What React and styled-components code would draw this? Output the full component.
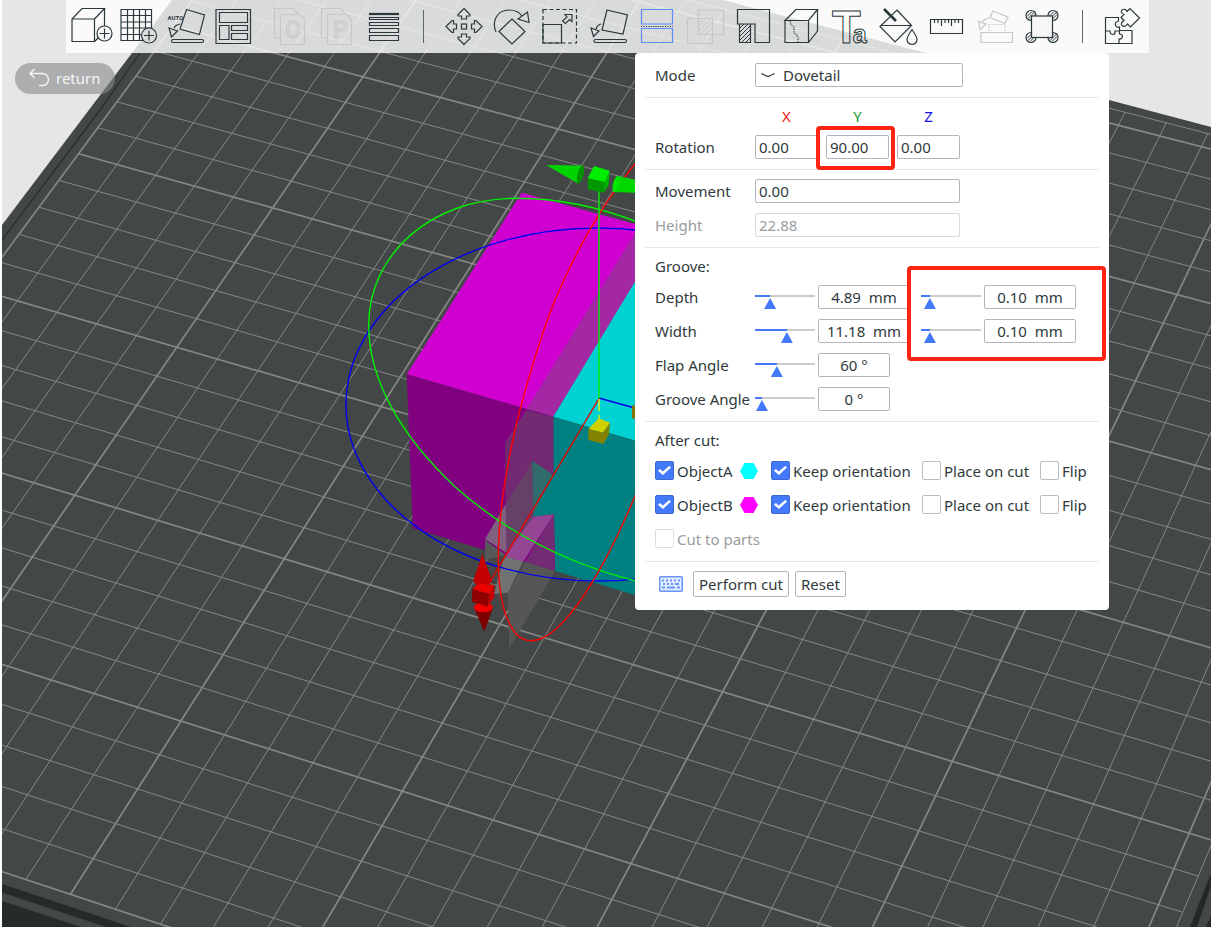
import React, { useState } from "react";
import styled, { createGlobalStyle } from "styled-components";

const ink = "#303a3c";
const faded = "#c6c7c7";
const blue = "#4479fb";
const line = "#b4b4bc";

const GlobalStyle = createGlobalStyle`
  *, *::before, *::after { box-sizing: border-box; }
  body {
    margin: 0;
    background: #e6e6e6;
    color: ${ink};
    font: 15px/18px "Noto Sans", "Open Sans", sans-serif;
  }
  button, input, select { font: inherit; color: inherit; }
`;

const Page = styled.main`
  position: relative;
  min-height: 100vh;
  overflow: hidden;
  border-left: 2px solid #fff;
`;

const Scene = styled.svg`
  position: absolute;
  inset: 0;
  width: 100%;
  height: 100%;
`;

const Overlay = styled.div`
  position: relative;
  display: flex;
  flex-direction: column;
`;

/* ---------- toolbar ---------- */

const Toolbar = styled.nav`
  display: flex;
  align-self: flex-start;
  height: 53px;
  margin-left: 64px;
  padding: 0 1px 0 2px;
  background: rgba(255, 255, 255, 0.8);
`;

const ToolGroup = styled.div`
  display: flex;
  margin-right: ${(p) => p.$gap || 0}px;
`;

const ToolButton = styled.button`
  width: ${(p) => p.$width}px;
  height: 53px;
  padding: 0;
  border: 0;
  background: none;
  color: ${(p) => (p.disabled ? faded : "#2c393c")};
  svg { display: block; overflow: visible; }
`;

const Divider = styled.span`
  width: ${(p) => p.$width}px;
  display: flex;
  justify-content: center;
  align-items: center;
  &::before {
    content: "";
    width: 1px;
    height: 33px;
    background: #5f6869;
  }
`;

/* ---------- workspace ---------- */

const Workspace = styled.div`
  display: flex;
  justify-content: space-between;
  align-items: flex-start;
  padding: 0 102px 0 13px;
`;

const ReturnButton = styled.button`
  display: flex;
  align-items: center;
  gap: 6px;
  height: 31px;
  margin-top: 10px;
  padding: 0 14px 2px;
  border: 0;
  border-radius: 16px;
  background: rgba(135, 137, 139, 0.6);
  color: #f4f4f4;
`;

const Panel = styled.form`
  position: relative;
  width: 474px;
  padding: 1px 10px 0;
  border-radius: 4px;
  background: #fff;
`;

const Section = styled.section`
  display: flex;
  flex-direction: column;
  gap: 10px;
  padding: 9px 10px 10px;
  border-bottom: 1px solid #e8e8e8;
`;

const Title = styled.h2`
  margin: 0;
  font-size: 15px;
  line-height: 18px;
  font-weight: 400;
`;

const Row = styled.div`
  display: flex;
  align-items: center;
  height: 24px;
  color: ${(p) => (p.$muted ? "#9a9c9d" : ink)};
`;

const RowLabel = styled.label`
  flex: 0 0 100px;
  white-space: nowrap;
`;

const Axes = styled.div`
  display: flex;
  gap: 8px;
`;

const AxisHeader = styled(Axes)`
  height: 18px;
  padding-left: 100px;
`;

const AxisName = styled.span`
  width: 63px;
  text-align: center;
  color: ${(p) => p.$color};
`;

const Field = styled.input`
  width: ${(p) => p.$width}px;
  height: 24px;
  padding: 0 3px;
  border: 1px solid ${line};
  border-radius: 2px;
  background: #fff;
  outline: 0;
  text-align: ${(p) => (p.$center ? "center" : "left")};
  &:disabled { border-color: #d9d9de; color: #9a9c9d; }
`;

const SelectBox = styled.div`
  position: relative;
  width: 208px;
  svg { position: absolute; left: 6px; top: 9px; pointer-events: none; }
`;

const Select = styled.select`
  display: block;
  width: 100%;
  height: 24px;
  padding: 0 0 0 27px;
  border: 1px solid ${line};
  border-radius: 2px;
  background: #fff;
  appearance: none;
`;

const Range = styled.input`
  appearance: none;
  align-self: flex-start;
  width: 60px;
  height: 22px;
  margin: 0 3px 0 ${(p) => (p.$second ? 11 : 0)}px;
  background: none;
  &::-webkit-slider-runnable-track {
    height: 2px;
    background: linear-gradient(to right, ${blue} ${(p) => p.$fill}px, #cbcbcb ${(p) => p.$fill}px);
  }
  &::-webkit-slider-thumb {
    appearance: none;
    width: 12px;
    height: 11px;
    margin-top: 3px;
    background: ${blue};
    clip-path: polygon(50% 0, 100% 100%, 0 100%);
  }
`;

const CheckRow = styled.div`
  display: grid;
  grid-template-columns: 85px 31px 151px 118px 1fr;
  align-items: center;
  height: 24px;
  padding-bottom: 1px;
`;

const CheckLabel = styled.label`
  display: flex;
  align-items: center;
  gap: 3px;
  white-space: nowrap;
  color: ${(p) => (p.$muted ? "#9a9c9d" : ink)};
`;

const Tick = styled.input`
  appearance: none;
  flex: none;
  width: 19px;
  height: 19px;
  margin: 0;
  border: 1px solid #bcbcc4;
  border-radius: 2px;
  background: #fff;
  &::before {
    content: "";
    display: none;
    width: 13px;
    height: 9px;
    margin: 4px 2px;
    background: #fff;
    clip-path: polygon(0 52%, 14% 34%, 37% 62%, 86% 0, 100% 17%, 38% 100%);
  }
  &:checked { border-color: #3a66cf; background: ${blue}; }
  &:checked::before { display: block; }
  &:disabled { border-color: #dedee2; }
`;

const Actions = styled.div`
  display: flex;
  align-items: center;
  gap: 6px;
  padding: 9px 10px 13px 14px;
  svg { margin-right: 4px; }
`;

const ActionButton = styled.button`
  height: 26px;
  padding: 0 5px;
  border: 1px solid ${line};
  border-radius: 2px;
  background: #fff;
`;

const Highlight = styled.span`
  position: absolute;
  left: ${(p) => p.$x}px;
  top: ${(p) => p.$y}px;
  width: ${(p) => p.$w}px;
  height: ${(p) => p.$h}px;
  border: 4px solid #ff2314;
  border-radius: 4px;
  pointer-events: none;
`;

/* ---------- build plate ---------- */

// Perspective projection of plate cells (u to the right, v toward the viewer).
function project(u, v) {
  const w = 1 - 0.0031 * u - 0.0066 * v;
  return [(43.05 * u - 22.55 * v + 180.9) / w, (11.59 * u + 28.75 * v + 721) / w];
}

const U0 = -10, U1 = 20.5, V0 = -25.5, V1 = 5;

function segment(a, b) {
  const [x1, y1] = project(...a);
  const [x2, y2] = project(...b);
  return `M${x1.toFixed(1)} ${y1.toFixed(1)}L${x2.toFixed(1)} ${y2.toFixed(1)}`;
}

function gridPaths() {
  const thin = [];
  const thick = [];
  for (let u = U0; u <= 20; u++) {
    (u % 5 === 0 ? thick : thin).push(segment([u, V0], [u, V1]));
  }
  for (let v = -25; v <= V1; v++) {
    (v % 5 === 0 ? thick : thin).push(segment([U0, v], [U1, v]));
  }
  thin.push(segment([U0, V0], [U1, V0]), segment([U1, V0], [U1, V1]));
  return { thin: thin.join(""), thick: thick.join("") };
}

const grid = gridPaths();

function PlateScene() {
  return (
    <Scene viewBox="2 0 1209 927" preserveAspectRatio="xMinYMin slice" aria-hidden="true">
      <path d="M172 0H723L926 53 1109 100 1211 127V927H2V225Z" fill="#434747" />
      <path d="M177 0L140 53 100 110 2 240" fill="none" stroke="#2a2d2d" strokeWidth="1.3" />
      <path d="M2 884L131 927H106L2 892.500ZM2 901L81 927H2Z" fill="#272a2a" />
      <path d="M1211 873V886L1197 927H1190ZM1211 916V927H1206Z" fill="#252828" />
      <path d={grid.thin} fill="none" stroke="#858883" strokeWidth="1" />
      <path d={grid.thick} fill="none" stroke="#858883" strokeWidth="1.7" />

      <path d="M521.700 192.700L640 225.500V240L526.700 409 406.700 374.300Z" fill="#d000d0" />
      <path d="M526.700 409L640 225V275L553.300 416.700Z" fill="#a428a4" />
      <path d="M553.300 416.700L640 273.500V442Z" fill="#00d2d2" />
      <path d="M406.700 374.300L553.300 416.700 555 571 412.700 528.300Z" fill="#800080" />
      <path d="M553.300 416.700L640 442V596.500L555 571 554 514.300 533.300 516.700 532.300 460.700 553.300 475Z" fill="#008080" />
      <path d="M526.700 410L553.300 417.300V475L532.300 460.700 505.700 504 505 442.700Z" fill="#722a72" />
      <path d="M532.300 460.700L533.300 516.700 507 556 505.700 504Z" fill="#674067" />
      <path d="M532.300 460.700L552 474 533.300 516Z" fill="#326b6b" />
      <path d="M505.700 504L506.700 553 485 539Z" fill="#80607f" />
      <path d="M485 540L506 555 485 560Z" fill="#565859" />
      <path d="M533.300 516.700L554 514.300 523 562 504 557Z" fill="#944594" />
      <path d="M554 514.300L555 571 525 562Z" fill="#752a76" />
      <path d="M504 556L523 562 508 592.500 494 594Z" fill="#717372" />
      <path d="M525 562L555 571 509.300 649 507.700 593Z" fill="#555655" />

      <g fill="none" strokeWidth="1.400">
        <ellipse cx="598" cy="404.500" rx="252" ry="176.500" stroke="#0000ee" />
        <path d="M640 223C597 206 556 198.300 516.700 198.300C430 198.300 368.700 255 368.700 325C368.700 382 403 438 455 486.700C508 534 571 565 640 582" stroke="#00f000" />
        <path d="M640 158C600 205 572 260 555 300C540 337 524 392 515 430C505 475 498.300 520 498.300 556.700C498.300 612 512 640.700 531 640.700C563 640.700 605 570 640 484" stroke="#f00" />
        <path d="M599 398L640 409.500" stroke="#0000e8" />
        <path d="M599 398.500L491 580" stroke="#e80000" />
        <path d="M599 190V398" stroke="#00ee00" />
        <path d="M599 399V419" stroke="#f0f000" strokeDasharray="12 4" />
      </g>

      <path d="M598.700 418.300L610 422.700 603 432.700 588.300 429Z" fill="#d0d000" />
      <path d="M588.300 429L603 432.700 610 422.700 609 434 603.500 444 588.300 440Z" fill="#828200" />
      <path d="M632 406L640 403V421L632 418Z" fill="#827200" />
      <path d="M594 166L609.700 170.700 605 182.300 587.700 178.300Z" fill="#00ee00" />
      <path d="M587.700 178.300L605 182.300 604 192.700 588 189.500Z" fill="#009a00" />
      <path d="M609.700 170.700L608.500 185 604 192.700 605 182.300Z" fill="#00b400" />
      <path d="M546 165L583 165.500 578 183.500Z" fill="#00d400" />
      <ellipse cx="580.500" cy="174.500" rx="3" ry="9.200" transform="rotate(14 580.500 174.500)" fill="#009200" />
      <path d="M618 176L640 181V193L613 192Z" fill="#00d800" />
      <ellipse cx="616" cy="184" rx="3" ry="8.500" transform="rotate(14 616 184)" fill="#00e600" />
      <path d="M482.300 554L492.300 581Q491 585 483 585T473.300 581Z" fill="#c40000" />
      <path d="M472.300 589L478 583.500 494.300 585 489.300 594Z" fill="#ec0000" />
      <path d="M472.300 589L489.300 594 487.700 606.700 472 601.700Z" fill="#900000" />
      <path d="M489.300 594L494.300 585V597L487.700 606.700Z" fill="#c80000" />
      <path d="M474.500 609L492.500 609 484.300 631.700Z" fill="#7c0000" />
      <ellipse cx="483.300" cy="607.500" rx="9.600" ry="4.800" fill="#f00000" />
      <path d="M472 601.700L487.700 606.700 489 602H473Z" fill="#900000" />
    </Scene>
  );
}

/* ---------- toolbar icons ---------- */

const icons = {
  addObject: (
    <>
      <path d="M72 19H94.500V41.500H72ZL82 8.500H104.500L94.500 19M104.500 8.500V32L94.500 41.500" />
      <circle cx="104.500" cy="33.500" r="7.500" fill="#fafafa" />
      <path d="M99.500 33.500h10M104.500 28.500v10" />
    </>
  ),
  addPlate: (
    <>
      <path d="M121 9.500H151.500V40.500H121ZM127.500 9.500v31M133.500 9.500v31M139.500 9.500v31M145.500 9.500v31M121 15.500h30.500M121 22h30.500M121 28h30.500M121 34.500h30.500" />
      <circle cx="149" cy="35.500" r="7.500" fill="#dcdddd" />
      <path d="M144 35.500h10M149 30.500v10" />
    </>
  ),
  autoOrient: (
    <>
      <path d="M186.500 9.500L204.500 15 199.500 34.500 180 29ZM169 28L177.500 31 171.500 37ZM174 28Q175.500 25 180 24" />
      <rect x="171.500" y="39.500" width="32" height="3" rx="1.500" />
      <text x="167.500" y="20" fontSize="6" fontWeight="700" stroke="none" fill="currentColor" fontFamily="Roboto, sans-serif">AUTO</text>
    </>
  ),
  arrange: (
    <path d="M216 9.500H250.500V43.500H216ZM219.500 12.500H247.500V22.500H219.500ZM219.500 25.500H229V39.500H219.500ZM231.500 25.500H247.500V30.500H231.500ZM231.500 33.500H247.500V39.500H231.500Z" />
  ),
  splitObjects: (
    <>
      <path d="M280.500 38H274.500V8.500H293.500L298 14M280.500 14.500H299.500L304.500 19.500V44.500H280.500Z" />
      <text x="285" y="38" fontSize="23" strokeWidth="0.8" fontFamily="Roboto, sans-serif">O</text>
    </>
  ),
  splitParts: (
    <>
      <path d="M327.500 38H321.500V8.500H340.500L345 14M327.500 14.500H346.500L351.500 19.500V44.500H327.500Z" />
      <text x="333" y="38" fontSize="23" strokeWidth="0.8" fontFamily="Roboto, sans-serif">P</text>
    </>
  ),
  layers: (
    <>
      <path d="M369 14H399" strokeWidth="2.200" />
      <path d="M369.500 17.500h29v2h-29ZM369.500 22.500h29v3h-29ZM369.500 28.500h29v4h-29ZM369.500 35.500h29v5h-29Z" />
    </>
  ),
  move: (
    <>
      <rect x="461.500" y="24" width="5" height="5" />
      {[0, 90, 180, 270].map((angle) => (
        <path key={angle} transform={`rotate(${angle} 464 26.500)`} d="M464 8.500L470 14.500V16H466.500V19H461.500V16H458V14.500Z" />
      ))}
    </>
  ),
  rotate: <path d="M512 19L525 31.500 512 44 499 31.500ZM496 32C491 20 498 10 509 10Q518 10 522 16M518 19L527.500 12 529 22.500Z" />,
  scale: (
    <>
      <path d="M543 9.500H576.500V43H543Z" strokeDasharray="4 2.500" />
      <path d="M543 24.500H561.500V43H543ZM572 14.500H565L567 17 562.500 21 565.500 23.500 569.500 19.500 572 21.500Z" />
    </>
  ),
  layFlat: (
    <>
      <path d="M607 10L627.500 15 623 34 602 30ZM591 28L599 31 593.500 36.500ZM596 29Q597 25 601 24" />
      <rect x="594" y="39.500" width="32.500" height="3" rx="1.500" />
    </>
  ),
  cut: (
    <>
      <path d="M641.500 9.500H672.500V24H641.500ZM641.500 28.500H672.500V42.500H641.500Z" stroke="#5a8cfa" />
      <path d="M641 26.500H673" strokeDasharray="1.200 1.200" />
    </>
  ),
  boolean: (
    <>
      <path d="M698.500 10H723.500V34.500H698.500ZM687.500 18.500H712.500V43.500H687.500Z" />
      <path d="M699 26L706 19M699 31L711 19M701 34L712 23M706 34L712 28" strokeWidth="0.8" />
    </>
  ),
  support: (
    <>
      <path d="M737.500 9.500H769.500V42.500H755V24H737.500ZM739.500 24H750.500V42.500H739.500Z" />
      <path d="M740 28l4-4M740 32l8-8M740 36l10-10M740 40l10-10M742 42l8-8M746 42l4-4" strokeWidth="1" />
    </>
  ),
  seam: (
    <>
      <path d="M785 20.500L796 9.500H817.500L808.500 20.500ZV42.500H808.500V20.500M817.500 9.500V31L808.500 42.500" />
      <path d="M790 21L791 25 794 27V33L798 36V42" strokeDasharray="1.200 1.200" />
    </>
  ),
  text: (
    <text x="832" y="42.500" fontSize="47" strokeWidth="1" fontWeight="700" fontFamily="Liberation Sans, sans-serif">
      T<tspan dx="-8" fontSize="25">a</tspan>
    </text>
  ),
  paint: (
    <>
      <path d="M897 10L911.500 25.500 895 42 880 26.500ZM880.500 25.500H911.500M912 29.500C909 34 907 37 907 39.500A5 5 0 0 0 917 39.500C917 37 915 34 912 29.500Z" />
      <path d="M884 9L896 21" strokeWidth="2.600" />
    </>
  ),
  measure: <path d="M930.500 19.500H962.500V33.500H930.500ZM934.500 20v3M938 20v3M941.500 20v6M945 20v3M948.500 20v3M951.500 20v6M955 20v3M958.500 20v3" />,
  assemble: (
    <>
      <path d="M981 32.500H1012.500V42.500H981ZM993 11L1008 17 1005 23.500 990 17.500ZM978.500 21.500L986 24 980 29.500ZM982 22Q984 19 989 18" />
      <path d="M989 31V24.500H1005V31" strokeDasharray="1.500 1.500" />
    </>
  ),
  brim: (
    <>
      {[[1031, 15.5], [1053, 15.5], [1031, 37.5], [1053, 37.5]].map(([x, y]) => (
        <g key={`${x}-${y}`}>
          <circle cx={x} cy={y} r="5" />
          <path d={`M${x - 4} ${y + 1}l5-5M${x - 3} ${y + 3}l7-7M${x - 1} ${y + 4}l5-5`} strokeWidth="1" />
        </g>
      ))}
      <rect x="1031.500" y="16" width="21" height="21.500" fill="#f6f6f6" />
    </>
  ),
  puzzle: (
    <>
      <path d="M1105.500 17.500H1118.500V21Q1114.500 22 1115.500 25.500Q1117 28 1119.500 27V30.500H1132V43.500H1105.500ZM1105.500 31H1110Q1110 34.500 1113 34.500Q1115.500 34 1115 31H1119.500V34Q1122.500 34 1122.500 36.500Q1122 39.500 1119 39V43.500" />
      <path d="M1121 17.500L1124 14.500Q1120 12.500 1122 10Q1125 8 1127 11.500L1130 8.500 1139.500 18 1130.500 27 1127.500 24Q1125 28 1122 25.500Q1120 23 1124 20.500Z" />
    </>
  ),
};

function Tool({ name, label, x, width = 48, disabled }) {
  return (
    <ToolButton type="button" aria-label={label} disabled={disabled} $width={width}>
      <svg width={width} height="53" viewBox={`${x} 0 ${width} 53`} fill="none" stroke="currentColor" strokeWidth="1.200">
        {icons[name]}
      </svg>
    </ToolButton>
  );
}

const gizmos = [
  ["move", "Move"], ["rotate", "Rotate"], ["scale", "Scale"], ["layFlat", "Lay on face"],
  ["cut", "Cut"], ["boolean", "Mesh boolean", true], ["support", "Support painting"],
  ["seam", "Seam painting"], ["text", "Text shape"], ["paint", "Color painting"],
  ["measure", "Measure"], ["assemble", "Assemble", true], ["brim", "Brim ears"],
];

/* ---------- panel parts ---------- */

function Slider({ label, at, second }) {
  const [value, setValue] = useState(Math.round(((at - 6) / 48) * 100));
  return (
    <Range
      type="range"
      aria-label={label}
      value={value}
      $fill={Math.round(6 + value * 0.48)}
      $second={second}
      onChange={(e) => setValue(Number(e.target.value))}
    />
  );
}

function GrooveRow({ id, label, at, value, tolerance }) {
  return (
    <Row>
      <RowLabel htmlFor={id}>{label}</RowLabel>
      <Slider label={`${label} slider`} at={at} />
      <Field id={id} defaultValue={value} $center $width={tolerance ? 92 : 72} />
      {tolerance && (
        <>
          <Slider label={`${label} tolerance slider`} at={9} second />
          <Field aria-label={`${label} tolerance`} defaultValue={tolerance} $center $width={92} />
        </>
      )}
    </Row>
  );
}

function Check({ children, checked, disabled }) {
  return (
    <CheckLabel $muted={disabled}>
      <Tick type="checkbox" defaultChecked={checked} disabled={disabled} />
      {children}
    </CheckLabel>
  );
}

function ObjectRow({ name, color }) {
  return (
    <CheckRow>
      <Check checked>{name}</Check>
      <svg width="18" height="16" viewBox="0 0 18 16" aria-hidden="true">
        <path d="M4.500 0H13.500L18 8 13.500 16H4.500L0 8Z" fill={color} />
      </svg>
      <Check checked>Keep orientation</Check>
      <Check>Place on cut</Check>
      <Check>Flip</Check>
    </CheckRow>
  );
}

function CutPanel() {
  return (
    <Panel onSubmit={(e) => e.preventDefault()}>
      <Section>
        <Row>
          <RowLabel htmlFor="mode">Mode</RowLabel>
          <SelectBox>
            <Select id="mode" defaultValue="Dovetail">
              <option>Dovetail</option>
              <option>Planar</option>
            </Select>
            <svg width="14" height="8" viewBox="0 0 14 8" fill="none" stroke={ink} strokeWidth="1.200">
              <path d="M0.500 1.500L6 4.200Q7 4.600 8 4.200L13.500 1.500" />
            </svg>
          </SelectBox>
        </Row>
      </Section>
      <Section>
        <AxisHeader>
          <AxisName $color="#f01818">X</AxisName>
          <AxisName $color="#1b9c3c">Y</AxisName>
          <AxisName $color="#1414e6">Z</AxisName>
        </AxisHeader>
        <Row>
          <RowLabel htmlFor="rotation-x">Rotation</RowLabel>
          <Axes>
            <Field id="rotation-x" defaultValue="0.00" $width={63} />
            <Field aria-label="Rotation Y" defaultValue="90.00" $width={63} />
            <Field aria-label="Rotation Z" defaultValue="0.00" $width={63} />
          </Axes>
        </Row>
      </Section>
      <Section>
        <Row>
          <RowLabel htmlFor="movement">Movement</RowLabel>
          <Field id="movement" defaultValue="0.00" $width={205} />
        </Row>
        <Row $muted>
          <RowLabel htmlFor="height">Height</RowLabel>
          <Field id="height" defaultValue="22.88" disabled $width={205} />
        </Row>
      </Section>
      <Section>
        <Title>Groove:</Title>
        <GrooveRow id="depth" label="Depth" at={15} value="4.89  mm" tolerance="0.10  mm" />
        <GrooveRow id="width" label="Width" at={32} value="11.18  mm" tolerance="0.10  mm" />
        <GrooveRow id="flap" label="Flap Angle" at={22} value="60 °" />
        <GrooveRow id="groove" label="Groove Angle" at={7} value="0 °" />
      </Section>
      <Section>
        <Title>After cut:</Title>
        <ObjectRow name="ObjectA" color="#00ffff" />
        <ObjectRow name="ObjectB" color="#ff00ff" />
        <CheckRow>
          <Check disabled>Cut to parts</Check>
        </CheckRow>
      </Section>
      <Actions>
        <svg width="24" height="16" viewBox="0 0 24 16" fill="none" stroke="#6a96fb" aria-label="Keyboard shortcuts">
          <rect x="0.700" y="0.700" width="22.600" height="14.600" rx="2" fill="#e3ebff" strokeWidth="1.600" />
          <path d="M3 4.500h2M7 4.500h2M11 4.500h2M15 4.500h2M19 4.500h2M4 8h2M8 8h2M12 8h2M16 8h4M3 11.500h3M8 11.500h8M18 11.500h3" strokeWidth="2" />
        </svg>
        <ActionButton type="submit">Perform cut</ActionButton>
        <ActionButton type="reset">Reset</ActionButton>
      </Actions>
      <Highlight $x={181} $y={73} $w={79} $h={44} />
      <Highlight $x={272} $y={213} $w={199} $h={95} />
    </Panel>
  );
}

export default function App() {
  return (
    <Page>
      <GlobalStyle />
      <PlateScene />
      <Overlay>
        <Toolbar>
          <ToolGroup $gap={10}>
            <Tool name="addObject" label="Add object" x={68} width={47} />
            <Tool name="addPlate" label="Add plate" x={115} width={47} />
            <Tool name="autoOrient" label="Auto orient" x={162} width={47} />
            <Tool name="arrange" label="Arrange" x={209} width={47} />
          </ToolGroup>
          <ToolGroup>
            <Tool name="splitObjects" label="Split to objects" x={266} width={47} disabled />
            <Tool name="splitParts" label="Split to parts" x={313} width={47} disabled />
            <Tool name="layers" label="Variable layer height" x={360} width={47} />
          </ToolGroup>
          <Divider $width={33} />
          <ToolGroup>
            {gizmos.map(([name, label, disabled], i) => (
              <Tool key={name} name={name} label={label} disabled={disabled} x={440 + i * 48} />
            ))}
          </ToolGroup>
          <Divider $width={36} />
          <Tool name="puzzle" label="Assembly view" x={1100} />
        </Toolbar>
        <Workspace>
          <ReturnButton type="button">
            <svg width="21" height="19" viewBox="0 0 21 19" fill="none" stroke="currentColor" strokeWidth="1.500" aria-hidden="true">
              <path d="M5.500 1L1 5.500 5.500 10M1 5.500H13.500A6 6 0 0 1 13.500 17.500H10" />
            </svg>
            return
          </ReturnButton>
          <CutPanel />
        </Workspace>
      </Overlay>
    </Page>
  );
}
